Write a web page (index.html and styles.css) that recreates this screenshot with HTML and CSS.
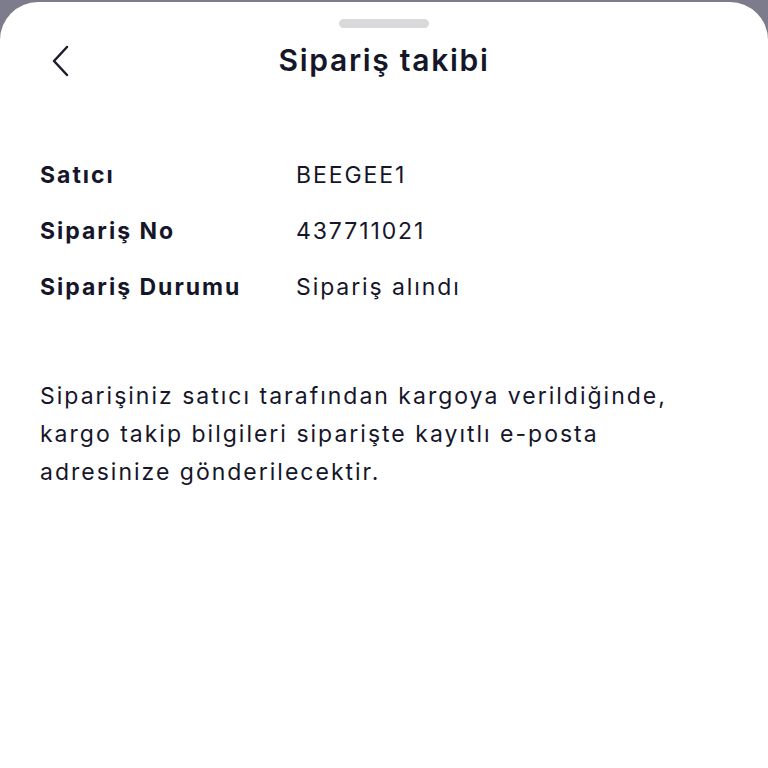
FILE: index.html
```html
<!DOCTYPE html>
<html lang="tr">
<head>
  <meta charset="UTF-8">
  <meta name="viewport" content="width=device-width, initial-scale=1.0">
  <title>Sipariş takibi</title>
  <link rel="stylesheet" href="styles.css">
</head>
<body>
  <div class="sheet">
    <div class="handle"></div>

    <header class="topbar">
      <button class="back" aria-label="Geri">
        <svg width="20" height="32" viewBox="0 0 20 32" fill="none">
          <path d="M16 2 L3 16 L16 30" stroke="#1b1b2b" stroke-width="2.5" stroke-linecap="round" stroke-linejoin="round"/>
        </svg>
      </button>
      <h1>Sipariş takibi</h1>
    </header>

    <dl class="details">
      <div class="row">
        <dt>Satıcı</dt>
        <dd>BEEGEE1</dd>
      </div>
      <div class="row">
        <dt>Sipariş No</dt>
        <dd>437711021</dd>
      </div>
      <div class="row">
        <dt>Sipariş Durumu</dt>
        <dd>Sipariş alındı</dd>
      </div>
    </dl>

    <p class="note">Siparişiniz satıcı tarafından kargoya verildiğinde, kargo takip bilgileri siparişte kayıtlı e-posta adresinize gönderilecektir.</p>
  </div>
</body>
</html>
```

FILE: styles.css
```css
html, body {
  height: 100%;
}
body {
  margin: 0;
  background: #7c7c8c;
  font-family: Inter, "Noto Sans", sans-serif;
  color: #16162a;
  overflow: hidden;
}
.sheet {
  box-sizing: border-box;
  margin-top: 2px;
  height: calc(100% - 2px);
  background: #fff;
  border-radius: 38px 38px 0 0;
  padding: 17px 40px 0;
}
.handle {
  width: 90px;
  height: 9px;
  border-radius: 5px;
  background: #d9d9dc;
  margin: 0 auto;
}
.topbar {
  position: relative;
  height: 50px;
  margin-top: 7px;
  display: flex;
  align-items: center;
  justify-content: center;
}
.back {
  position: absolute;
  left: 11px;
  top: 10px;
  background: none;
  border: none;
  padding: 0;
  cursor: pointer;
  display: flex;
}
.topbar h1 {
  margin: 0;
  font-size: 30px;
  font-weight: 600;
  letter-spacing: 1.7px;
}
.details {
  margin: 62px 0 0;
}
.row {
  display: flex;
  height: 56px;
  align-items: center;
  font-size: 23px;
}
.row dt {
  width: 256px;
  font-weight: 700;
  letter-spacing: 2px;
}
.row dd {
  margin: 0;
  font-weight: 400;
  letter-spacing: 1.9px;
}
.note {
  margin: 62px 0 0;
  font-size: 23px;
  line-height: 38px;
  letter-spacing: 2px;
  max-width: 670px;
}
```
